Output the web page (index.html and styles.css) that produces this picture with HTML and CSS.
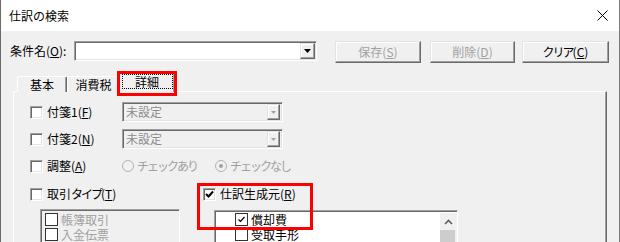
FILE: index.html
```html
<!DOCTYPE html>
<html>
<head>
  <meta charset="utf-8">
  <title>仕訳の検索</title>
  <link rel="stylesheet" href="styles.css">
</head>
<body>
  <div class="window">
    <div class="titlebar">
      <span class="title">仕訳の検索</span>
      <svg class="close" width="11" height="11" viewBox="0 0 11 11">
        <path d="M0.5 0.5L10.5 10.5M10.5 0.5L0.5 10.5" stroke="#000" stroke-width="1"/>
      </svg>
    </div>

    <div class="toolbar">
      <span class="field-label">条件名(<u>O</u>):</span>
      <div class="combo combo-name">
        <span class="combo-text"></span>
        <span class="drop-btn">
          <svg width="7" height="4" viewBox="0 0 7 4"><path d="M0 0H7L3.5 4Z" fill="#000"/></svg>
        </span>
      </div>
      <div class="btn btn-save disabled"><span>保存(<u>S</u>)</span></div>
      <div class="btn btn-delete disabled"><span>削除(<u>D</u>)</span></div>
      <div class="btn btn-clear"><span><span class="kana">クリア</span>(<u>C</u>)</span></div>
    </div>

    <div class="tabs">
      <div class="tab tab-basic">基本</div>
      <div class="tab tab-tax">消費税</div>
      <div class="tab tab-detail active"><span class="focus">詳細</span></div>
    </div>

    <div class="panel">
      <div class="row">
        <label class="opt opt-first"><span class="check"></span><span>付箋1(<u>F</u>)</span></label>
        <div class="combo combo-off">
          <span class="combo-text">未設定</span>
          <span class="drop-btn">
            <svg width="5" height="3" viewBox="0 0 5 3"><path d="M0 0H5L2.5 3Z" fill="#a0a0a0"/></svg>
          </span>
        </div>
      </div>
      <div class="row">
        <label class="opt opt-first"><span class="check"></span><span>付箋2(<u>N</u>)</span></label>
        <div class="combo combo-off">
          <span class="combo-text">未設定</span>
          <span class="drop-btn">
            <svg width="5" height="3" viewBox="0 0 5 3"><path d="M0 0H5L2.5 3Z" fill="#a0a0a0"/></svg>
          </span>
        </div>
      </div>
      <div class="row">
        <label class="opt opt-first"><span class="check"></span><span>調整(<u>A</u>)</span></label>
        <label class="radio radio-first">
          <span class="radio-dot"></span><span class="kana">チェックあり</span>
        </label>
        <label class="radio">
          <span class="radio-dot selected"></span><span class="kana">チェックなし</span>
        </label>
      </div>
      <div class="row">
        <label class="opt opt-wide"><span class="check"></span><span>取引<span class="kana">タイプ</span>(<u>T</u>)</span></label>
        <label class="opt">
          <span class="check">
            <svg width="9" height="9" viewBox="0 0 9 9"><path d="M1 4L3.5 6.5L8 1.5" stroke="#000" stroke-width="2" fill="none"/></svg>
          </span><span>仕訳生成元(<u>R</u>)</span>
        </label>
      </div>
      <div class="lists">
        <div class="list list-off">
          <div class="item"><span class="check small"></span><span>帳簿取引</span></div>
          <div class="item"><span class="check small"></span><span>入金伝票</span></div>
        </div>
        <div class="list list-source">
          <div class="list-items">
            <div class="item">
              <span class="check small">
                <svg width="9" height="9" viewBox="0 0 9 9"><path d="M1.5 4.5L3.5 6.5L7.5 2" stroke="#000" stroke-width="1.2" fill="none"/></svg>
              </span><span>償却費</span>
            </div>
            <div class="item"><span class="check small"></span><span>受取手形</span></div>
          </div>
          <div class="scrollbar">
            <span class="scroll-up">
              <svg width="9" height="6" viewBox="0 0 9 6"><path d="M1 5L4.5 1.5L8 5" stroke="#606060" stroke-width="1.6" fill="none"/></svg>
            </span>
            <span class="thumb"></span>
          </div>
        </div>
      </div>
    </div>

    <div class="mark mark-tab"></div>
    <div class="mark mark-source"></div>
  </div>
</body>
</html>
```

FILE: styles.css
```css
/* basic style */
body {
  margin: 0;
  font-family: "Noto Sans CJK JP", "Noto Sans", sans-serif;
  font-size: 12px;
  color: #000;
}

u {
  text-decoration: underline;
  text-underline-offset: 1px;
}

/* katakana runs are narrow in the dialog font */
.kana {
  letter-spacing: -2px;
}

.window {
  position: relative;
  width: 618px;
  height: 242px;
  overflow: hidden;
  background: #f0f0f0;
  border-left: 1px solid #6b6b6b;
  border-right: 1px solid #7a7a7a;
}

/* title bar */
.titlebar {
  height: 31px;
  background: #fff;
  display: flex;
  align-items: center;
  justify-content: space-between;
  padding: 0 11px 0 8px;
}

.title {
  font-size: 12px;
  line-height: 14px;
}

/* search name row */
.toolbar {
  display: flex;
  align-items: flex-start;
  margin-top: 10px;
  padding-left: 9px;
  height: 21px;
}

.field-label {
  width: 64px;
  line-height: 19px;
}

.combo {
  position: relative;
  box-sizing: border-box;
  display: flex;
  align-items: center;
  background: #fff;
  border: 1px solid;
  border-color: #a0a0a0 #fff #fff #a0a0a0;
  box-shadow: inset 1px 1px #696969, inset -1px -1px #e3e3e3;
}

.combo-name {
  width: 243px;
  height: 20px;
}

.combo-text {
  flex: 1;
  padding-left: 3px;
  line-height: 16px;
}

.drop-btn {
  box-sizing: border-box;
  width: 15px;
  height: 16px;
  margin-right: 1px;
  display: flex;
  align-items: center;
  justify-content: center;
  background: #f0f0f0;
  border: 1px solid;
  border-color: #e3e3e3 #696969 #696969 #e3e3e3;
  box-shadow: inset -1px -1px #a0a0a0, inset 1px 1px #fff;
}

.btn {
  box-sizing: border-box;
  height: 22px;
  display: flex;
  align-items: center;
  justify-content: center;
  background: #f0f0f0;
  border: 1px solid;
  border-color: #e3e3e3 #696969 #696969 #e3e3e3;
  box-shadow: inset -1px -1px #a0a0a0, inset 1px 1px #fff;
  line-height: 14px;
}

.btn.disabled {
  color: #a0a0a0;
}

.btn-save {
  width: 86px;
  margin-left: 18px;
}

.btn-delete {
  width: 85px;
  margin-left: 9px;
}

.btn-clear {
  width: 87px;
  margin-left: 7px;
}

/* tabs */
.tabs {
  display: flex;
  align-items: flex-end;
  margin-top: 10px;
  margin-left: 14px;
  height: 20px;
  position: relative;
  z-index: 1;
  margin-bottom: -1px;
}

.tab {
  box-sizing: border-box;
  height: 16px;
  display: flex;
  align-items: center;
  justify-content: center;
  background: #f0f0f0;
  border-top: 1px solid #fff;
  border-left: 1px solid #fff;
  border-right: 1px solid #696969;
  box-shadow: inset -1px 0 #a0a0a0;
  border-radius: 2px 2px 0 0;
  line-height: 14px;
}

.tab-basic {
  width: 50px;
  margin-left: 2px;
}

.tab-tax {
  width: 53px;
}

.tab.active {
  width: 56px;
  height: 20px;
  margin-left: -1px;
  padding-bottom: 2px;
}

.focus {
  box-sizing: border-box;
  width: 51px;
  height: 15px;
  display: flex;
  align-items: center;
  justify-content: center;
  border: 1px dotted #000;
}

/* tab page */
.panel {
  box-sizing: border-box;
  margin-left: 12px;
  width: 594px;
  height: 160px;
  padding: 10px 0 0 16px;
  border-top: 1px solid #fff;
  border-left: 1px solid #fff;
  border-right: 1px solid #696969;
  box-shadow: inset -1px 0 #a0a0a0;
}

.row {
  display: flex;
  align-items: center;
  height: 20px;
  margin-bottom: 7px;
}

.row:nth-child(3) {
  margin-top: 1px;
  margin-bottom: 8px;
}

.opt {
  display: flex;
  align-items: center;
  gap: 4px;
  line-height: 14px;
}

.opt-first {
  width: 92px;
}

.opt-wide {
  width: 173px;
}

.check {
  box-sizing: border-box;
  flex: none;
  width: 13px;
  height: 13px;
  display: flex;
  align-items: center;
  justify-content: center;
  background: #fff;
  border: 1px solid;
  border-color: #a0a0a0 #fff #fff #a0a0a0;
  box-shadow: inset 1px 1px #696969, inset -1px -1px #e3e3e3;
}

.combo-off {
  width: 161px;
  height: 20px;
  background: #f0f0f0;
  color: #8c8c8c;
}

.combo-off .drop-btn {
  width: 13px;
  margin-right: 2px;
}

.radio {
  display: flex;
  align-items: center;
  gap: 3px;
  color: #a0a0a0;
  line-height: 14px;
}

.radio-first {
  width: 93px;
}

.radio-dot {
  box-sizing: border-box;
  flex: none;
  width: 12px;
  height: 12px;
  border-radius: 50%;
  border: 1px solid #b4b4b4;
  background: #f0f0f0;
  display: flex;
  align-items: center;
  justify-content: center;
}

.radio-dot.selected::after {
  content: "";
  width: 4px;
  height: 4px;
  border-radius: 50%;
  background: #a0a0a0;
}

/* lists */
.lists {
  display: flex;
  align-items: flex-start;
  margin-top: -2px;
}

.list {
  box-sizing: border-box;
  border: 1px solid;
  border-color: #a0a0a0 #fff #fff #a0a0a0;
  box-shadow: inset 1px 1px #696969;
}

.list-off {
  width: 140px;
  height: 50px;
  margin-left: 10px;
  padding: 2px 0 0 4px;
  color: #a0a0a0;
  background: #f0f0f0;
}

.list-off .check {
  background: #f0f0f0;
  border-color: #c8c8c8 #fff #fff #c8c8c8;
  box-shadow: inset 1px 1px #b4b4b4;
}

.list-source {
  width: 244px;
  height: 50px;
  margin-left: 34px;
  margin-top: 1px;
  display: flex;
  background: #fff;
}

.list-items {
  flex: 1;
  padding: 1px 0 0 20px;
}

.item {
  display: flex;
  align-items: center;
  gap: 3px;
  height: 15px;
  line-height: 14px;
}

.check.small {
  border: 1px solid #333;
  box-shadow: none;
  background: #fff;
}

.scrollbar {
  width: 17px;
  margin-top: 2px;
  background: #f0f0f0;
  display: flex;
  flex-direction: column;
}

.scroll-up {
  height: 17px;
  display: flex;
  align-items: center;
  justify-content: center;
}

.thumb {
  flex: 1;
  margin: 0 2px 0 0;
  background: #cdcdcd;
}

/* red highlight marks */
.mark {
  position: absolute;
  box-sizing: border-box;
  border: 3px solid #ff0000;
  z-index: 2;
}

.mark-tab {
  left: 116px;
  top: 71px;
  width: 60px;
  height: 25px;
}

.mark-source {
  left: 196px;
  top: 183px;
  width: 116px;
  height: 47px;
}
```
